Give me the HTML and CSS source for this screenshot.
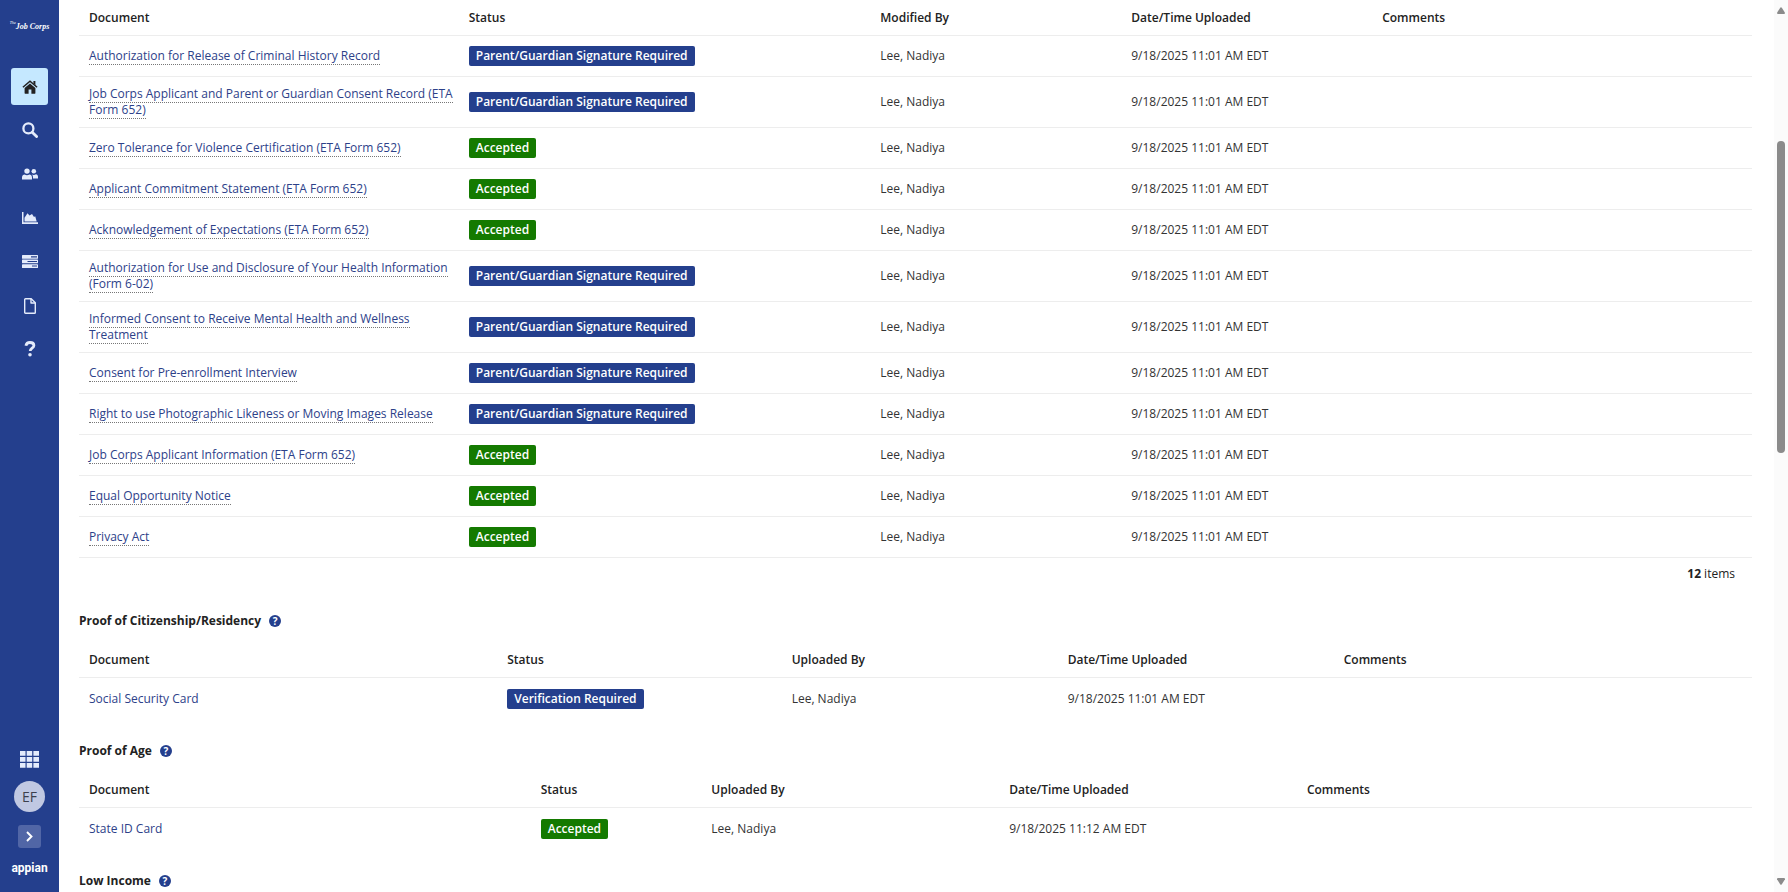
FILE: index.html
```html
<!DOCTYPE html>
<html lang="en">
<head>
    <meta charset="UTF-8">
    <meta name="viewport" content="width=device-width, initial-scale=1.0">
    <title>Applicant Documents</title>
    <link rel="stylesheet" href="styles.css">
</head>
<body>
    <div class="app">
        <!-- Sidebar -->
        <aside class="sidebar">
            <a href="#" class="brand"><span class="brand-the">The</span>Job Corps</a>

            <nav class="nav">
                <a href="#" class="nav-link active" aria-label="Home">
                    <svg width="16" height="14" viewBox="0 0 16 14"><path d="M8 3.4 2.6 8v5.2c0 .3.2.5.5.5h3.5V9.6h2.8v4.1h3.5c.3 0 .5-.2.5-.5V8z"/><path d="M.9 7.3 8 1.3l7.1 6" fill="none" stroke="currentColor" stroke-width="1.5"/><path d="M11.4 1h2v4.2l-2-1.7z"/></svg>
                </a>
                <a href="#" class="nav-link" aria-label="Search">
                    <svg width="16" height="16" viewBox="0 0 16 16" fill="none" stroke="currentColor"><circle cx="6.4" cy="6.4" r="5" stroke-width="2.3"/><path d="m10.2 10.2 4.4 4.4" stroke-width="2.8" stroke-linecap="round"/></svg>
                </a>
                <a href="#" class="nav-link" aria-label="Users">
                    <svg width="16" height="12" viewBox="0 0 16 12"><circle cx="5" cy="3.1" r="2.7"/><path d="M0 11.4V9.6c0-2 1.2-3.2 2.6-3.2.7.5 1.5.8 2.4.8s1.7-.3 2.4-.8c1.4 0 2.6 1.2 2.6 3.2v1.8z"/><circle cx="11.8" cy="3.3" r="2.3"/><path d="M9.6 6.3c.6.5 1.3.7 2.2.7s1.5-.2 2.1-.7c1.2 0 2.1 1 2.1 2.5v1.7h-5V9.5c0-1.4-.5-2.5-1.4-3.2z"/></svg>
                </a>
                <a href="#" class="nav-link" aria-label="Reports">
                    <svg width="16" height="12" viewBox="0 0 16 12"><path d="M0 0h1.5v10.3H16v1.6H0z"/><path d="M2.5 9.4V5.7l3-4.5 2 2.2L10 2l2 3 1.2-.8 1.5 5.2z"/></svg>
                </a>
                <a href="#" class="nav-link" aria-label="Tasks">
                    <svg width="16" height="13" viewBox="0 0 16 13"><rect width="16" height="3.7" rx=".5"/><rect y="4.6" width="16" height="3.7" rx=".5"/><rect y="9.2" width="16" height="3.7" rx=".5"/><path d="M9 1.9h6M5.5 6.5H15M10 11h5" stroke="#243f8d" stroke-width="1.1"/></svg>
                </a>
                <a href="#" class="nav-link" aria-label="Documents">
                    <svg width="12" height="16" viewBox="0 0 12 16" fill="none" stroke="currentColor" stroke-width="1.4" stroke-linejoin="round"><path d="M.7 1.5c0-.5.3-.8.8-.8h5.7l4.1 4.1v9.7c0 .5-.3.8-.8.8h-9c-.5 0-.8-.3-.8-.8z"/><path d="M7 .8V5h4.2"/></svg>
                </a>
                <a href="#" class="nav-link" aria-label="Help">
                    <svg width="12" height="16" viewBox="0 0 12 16"><path d="M1.9 4.7C2.300 2.700 3.800 1.500 5.900 1.500c2.400 0 4 1.200 4 3 0 2.700-3.700 2.700-3.700 5.500" fill="none" stroke="currentColor" stroke-width="2.800"/><circle cx="6" cy="13.800" r="1.800"/></svg>
                </a>
            </nav>

            <div class="sidebar-footer">
                <button type="button" class="icon-button" aria-label="Applications">
                    <svg width="19" height="17" viewBox="0 0 19 17"><path d="M0 0h5.500v4.800H0zM6.700 0h5.500v4.800H6.700zM13.400 0H19v4.800h-5.600zM0 6h5.500v4.800H0zM6.700 6h5.500v4.800H6.700zM13.400 6H19v4.800h-5.600zM0 12h5.500v4.800H0zM6.700 12h5.500v4.800H6.700zM13.400 12H19v4.800h-5.600z"/></svg>
                </button>
                <button type="button" class="avatar">EF</button>
                <button type="button" class="expand" aria-label="Expand">
                    <svg width="7" height="11" viewBox="0 0 7 11" fill="none" stroke="currentColor" stroke-width="1.900"><path d="m1 1 4.500 4.500L1 10"/></svg>
                </button>
                <a href="#" class="vendor">appian</a>
            </div>
        </aside>

        <!-- Documents -->
        <main class="content">
            <table class="grid grid-forms">
                <thead>
                    <tr><th>Document</th><th>Status</th><th>Modified By</th><th>Date/Time Uploaded</th><th>Comments</th></tr>
                </thead>
                <tbody>
                    <tr><td><a href="#">Authorization for Release of Criminal History Record</a></td><td><span class="tag">Parent/Guardian Signature Required</span></td><td>Lee, Nadiya</td><td>9/18/2025 11:01 AM EDT</td><td></td></tr>
                    <tr><td><a href="#">Job Corps Applicant and Parent or Guardian Consent Record (ETA Form 652)</a></td><td><span class="tag">Parent/Guardian Signature Required</span></td><td>Lee, Nadiya</td><td>9/18/2025 11:01 AM EDT</td><td></td></tr>
                    <tr><td><a href="#">Zero Tolerance for Violence Certification (ETA Form 652)</a></td><td><span class="tag accepted">Accepted</span></td><td>Lee, Nadiya</td><td>9/18/2025 11:01 AM EDT</td><td></td></tr>
                    <tr><td><a href="#">Applicant Commitment Statement (ETA Form 652)</a></td><td><span class="tag accepted">Accepted</span></td><td>Lee, Nadiya</td><td>9/18/2025 11:01 AM EDT</td><td></td></tr>
                    <tr><td><a href="#">Acknowledgement of Expectations (ETA Form 652)</a></td><td><span class="tag accepted">Accepted</span></td><td>Lee, Nadiya</td><td>9/18/2025 11:01 AM EDT</td><td></td></tr>
                    <tr><td><a href="#">Authorization for Use and Disclosure of Your Health Information (Form 6-02)</a></td><td><span class="tag">Parent/Guardian Signature Required</span></td><td>Lee, Nadiya</td><td>9/18/2025 11:01 AM EDT</td><td></td></tr>
                    <tr><td><a href="#">Informed Consent to Receive Mental Health and Wellness Treatment</a></td><td><span class="tag">Parent/Guardian Signature Required</span></td><td>Lee, Nadiya</td><td>9/18/2025 11:01 AM EDT</td><td></td></tr>
                    <tr><td><a href="#">Consent for Pre-enrollment Interview</a></td><td><span class="tag">Parent/Guardian Signature Required</span></td><td>Lee, Nadiya</td><td>9/18/2025 11:01 AM EDT</td><td></td></tr>
                    <tr><td><a href="#">Right to use Photographic Likeness or Moving Images Release</a></td><td><span class="tag">Parent/Guardian Signature Required</span></td><td>Lee, Nadiya</td><td>9/18/2025 11:01 AM EDT</td><td></td></tr>
                    <tr><td><a href="#">Job Corps Applicant Information (ETA Form 652)</a></td><td><span class="tag accepted">Accepted</span></td><td>Lee, Nadiya</td><td>9/18/2025 11:01 AM EDT</td><td></td></tr>
                    <tr><td><a href="#">Equal Opportunity Notice</a></td><td><span class="tag accepted">Accepted</span></td><td>Lee, Nadiya</td><td>9/18/2025 11:01 AM EDT</td><td></td></tr>
                    <tr><td><a href="#">Privacy Act</a></td><td><span class="tag accepted">Accepted</span></td><td>Lee, Nadiya</td><td>9/18/2025 11:01 AM EDT</td><td></td></tr>
                </tbody>
            </table>
            <div class="item-count"><strong>12</strong> items</div>

            <h2>Proof of Citizenship/Residency <button type="button" class="help" aria-label="Help">?</button></h2>
            <table class="grid grid-citizenship">
                <thead>
                    <tr><th>Document</th><th>Status</th><th>Uploaded By</th><th>Date/Time Uploaded</th><th>Comments</th></tr>
                </thead>
                <tbody>
                    <tr><td><a href="#">Social Security Card</a></td><td><span class="tag">Verification Required</span></td><td>Lee, Nadiya</td><td>9/18/2025 11:01 AM EDT</td><td></td></tr>
                </tbody>
            </table>

            <h2>Proof of Age <button type="button" class="help" aria-label="Help">?</button></h2>
            <table class="grid grid-age">
                <thead>
                    <tr><th>Document</th><th>Status</th><th>Uploaded By</th><th>Date/Time Uploaded</th><th>Comments</th></tr>
                </thead>
                <tbody>
                    <tr><td><a href="#">State ID Card</a></td><td><span class="tag accepted">Accepted</span></td><td>Lee, Nadiya</td><td>9/18/2025 11:12 AM EDT</td><td></td></tr>
                </tbody>
            </table>

            <h2>Low Income <button type="button" class="help" aria-label="Help">?</button></h2>
        </main>

        <!-- Scrollbar -->
        <div class="scrollbar" aria-hidden="true">
            <svg width="8" height="7" viewBox="0 0 8 7"><path d="M3.200.8Q4-.2 4.800.8L8 5.800Q8 7 7 7H1Q0 7 0 5.800z"/></svg>
            <div class="track"><div class="thumb"></div></div>
            <svg width="8" height="7" viewBox="0 0 8 7"><path d="M3.200 6.200Q4 7.200 4.800 6.200L8 1.200Q8 0 7 0H1Q0 0 0 1.200z"/></svg>
        </div>
    </div>
</body>
</html>
```
FILE: styles.css
```css
* {
    box-sizing: border-box;
}

body {
    font-family: "Open Sans", "Noto Sans", sans-serif;
    font-size: 12px;
    line-height: 16px;
    color: #333;
    background-color: #ffffff;
    margin: 0;
}

a {
    color: #2d4189;
    text-decoration: none;
}

button {
    font-family: inherit;
    border: none;
    padding: 0;
    cursor: pointer;
}

svg {
    display: block;
    fill: currentColor;
}

svg[fill="none"] {
    fill: none;
}

.app {
    display: flex;
    height: 100vh;
    overflow: hidden;
}

/* Sidebar */
.sidebar {
    flex: none;
    width: 59px;
    padding: 19px 0 17px;
    display: flex;
    flex-direction: column;
    align-items: center;
    background-color: #243f8d;
    color: #e4ebfb;
}

.brand {
    display: flex;
    color: #ffffff;
    font-family: "Liberation Serif", serif;
    font-size: 8px;
    font-style: italic;
    font-weight: bold;
    white-space: nowrap;
}

.brand-the {
    font-size: 4px;
    font-weight: normal;
    line-height: 8px;
}

.nav {
    height: 300px;
    margin-top: 33px;
    display: flex;
    flex-direction: column;
    justify-content: space-between;
}

.nav-link {
    width: 37px;
    height: 37px;
    display: flex;
    align-items: center;
    justify-content: center;
    border-radius: 3px;
    color: #e4ebfb;
}

.nav-link.active {
    background-color: #c5e8ff;
    color: #222222;
}

.sidebar-footer {
    margin-top: auto;
    display: flex;
    flex-direction: column;
    align-items: center;
    gap: 13px;
}

.icon-button {
    background: none;
    color: #e4ebfb;
}

.avatar {
    width: 31px;
    height: 31px;
    border-radius: 50%;
    background-color: #c0c8e2;
    color: #3c3f4c;
    font-size: 14px;
    font-weight: 500;
}

.expand {
    width: 23px;
    height: 23px;
    display: flex;
    align-items: center;
    justify-content: center;
    border-radius: 3px;
    background-color: #5166a6;
    color: #ffffff;
}

.vendor {
    color: #ffffff;
    font-family: Roboto, sans-serif;
    font-weight: 700;
    line-height: 14px;
}

/* Documents */
.content {
    flex: 1;
    min-width: 0;
    padding: 0 22px 0 20px;
}

.grid {
    width: 100%;
    table-layout: fixed;
    border-spacing: 0;
}

.grid th {
    height: 36px;
    padding: 1px 4px 0 10px;
    border-bottom: 1px solid #ededed;
    color: #222222;
    font-weight: 600;
    text-align: left;
}

.grid td {
    height: 41px;
    padding: 9px 4px 9px 10px;
    border-bottom: 1px solid #ededed;
}

.grid-forms td a {
    border-bottom: 1px dotted #777;
}

.grid-forms th:nth-child(1) { width: 22.7%; }
.grid-forms th:nth-child(2) { width: 24.6%; }
.grid-forms th:nth-child(3) { width: 15%; }
.grid-forms th:nth-child(4) { width: 15%; }

.grid-citizenship th:nth-child(1) { width: 25%; }
.grid-citizenship th:nth-child(2) { width: 17%; }
.grid-citizenship th:nth-child(3) { width: 16.5%; }
.grid-citizenship th:nth-child(4) { width: 16.5%; }

.grid-age th:nth-child(1) { width: 27%; }
.grid-age th:nth-child(2) { width: 10.2%; }
.grid-age th:nth-child(3) { width: 17.8%; }
.grid-age th:nth-child(4) { width: 17.8%; }

.grid-citizenship td,
.grid-age td {
    border-bottom: none;
}

.tag {
    display: inline-block;
    padding: 0 7px;
    border-radius: 2px;
    background-color: #243f8d;
    color: #ffffff;
    font-weight: 600;
    line-height: 20px;
    white-space: nowrap;
    vertical-align: middle;
}

.tag.accepted {
    background-color: #147a00;
}

.item-count {
    padding: 6px 17px 5px;
    color: #222222;
    line-height: 20px;
    text-align: right;
}

h2 {
    display: flex;
    align-items: center;
    gap: 8px;
    margin: 22px 0 11px;
    color: #222222;
    font-size: 12px;
    font-weight: 700;
    line-height: 20px;
}

.help {
    width: 12px;
    height: 12px;
    border-radius: 50%;
    background-color: #243f8d;
    color: #ffffff;
    font-size: 10px;
    font-weight: 700;
    line-height: 12px;
}

/* Scrollbar */
.scrollbar {
    flex: none;
    width: 14px;
    padding: 7px 0;
    display: flex;
    flex-direction: column;
    align-items: center;
    background-color: #fbfbfb;
    color: #8b8b8b;
}

.track {
    flex: 1;
    width: 8px;
    display: flex;
    flex-direction: column;
}

.track::before {
    content: "";
    flex: 127;
}

.track::after {
    content: "";
    flex: 425;
}

.thumb {
    flex: 312;
    border-radius: 4px;
    background-color: #8b8b8b;
}
```
